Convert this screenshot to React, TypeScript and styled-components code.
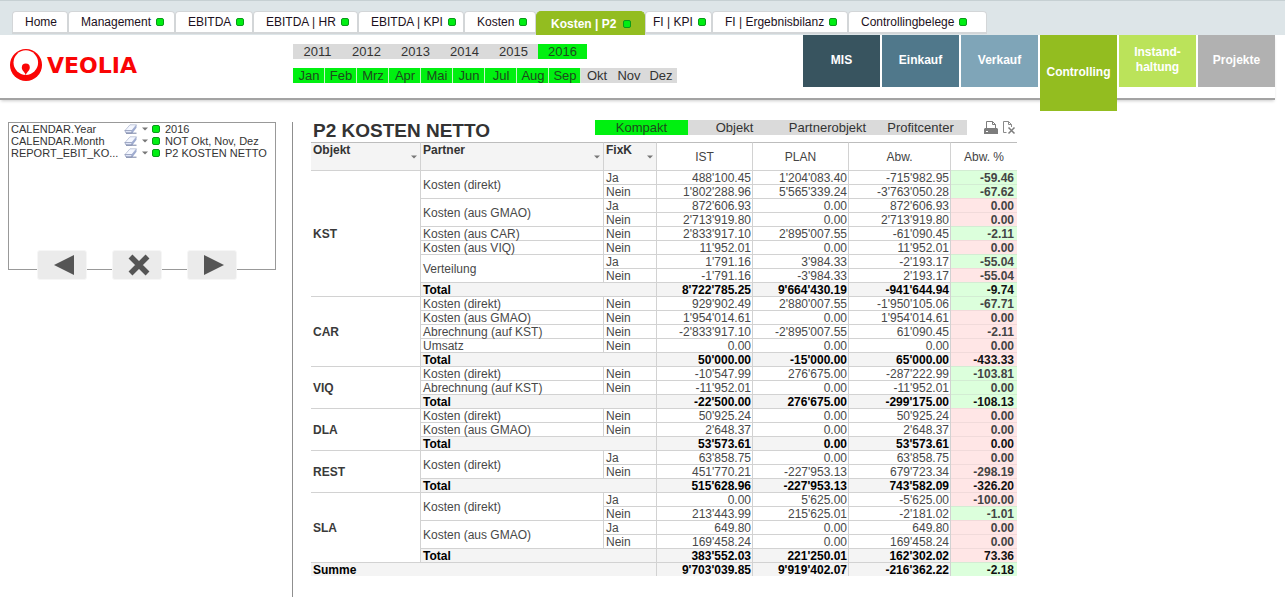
import React from "react";
import styled, { createGlobalStyle } from "styled-components";

const GlobalStyle = createGlobalStyle`
  * { box-sizing: border-box; }
  body {
    margin: 0;
    background: #fff;
    color: #333;
    font: 12px/12px "Liberation Sans", Arial, sans-serif;
  }
  button { font: inherit; color: inherit; border: 0; padding: 0; background: none; cursor: pointer; }
  a { color: inherit; text-decoration: none; }
`;

const Page = styled.div`
  display: flex;
  flex-direction: column;
  min-height: 100vh;
`;

/* ---------- sheet tabs ---------- */

const TabBar = styled.nav`
  display: flex;
  align-items: flex-start;
  height: 35px;
  padding: 10px 0 0 12px;
  background: #dde5e8;
  border-top: 1px solid #c6d0d3;
`;

const Tab = styled.a<{ $width: number; $tucked?: boolean }>`
  display: flex;
  align-items: center;
  gap: 5px;
  flex: 0 0 ${(p) => p.$width}px;
  height: 23px;
  padding-left: ${(p) => (p.$tucked ? 7 : 12)}px;
  background: #fff;
  color: #1c1020;
  border: 1px solid #d3d6d8;
  border-width: 1px 1px 2px 1px;
  border-radius: 4px 4px 0 0;
  white-space: nowrap;
`;

const ActiveTab = styled(Tab)`
  gap: 7px;
  height: 24px;
  padding-left: 14px;
  background: #93bd20;
  border-color: #93bd20;
  border-bottom-width: 0;
  border-radius: 5px 5px 0 0;
  color: #fff;
  font-weight: bold;
`;

const Dot = styled.span`
  flex: none;
  width: 8px;
  height: 8px;
  background: #00ee12;
  border: 1px solid #0a9a1a;
  border-radius: 2px;
`;

/* ---------- header ---------- */

const Header = styled.header`
  display: flex;
  align-items: flex-start;
  height: 65px;
  margin-right: 10px;
  border-bottom: 2px solid #a3a3a3;
  box-shadow: 0 2px 3px -1px #ccc;
`;

const Brand = styled.a`
  display: flex;
  align-items: center;
  gap: 4px;
  flex: 0 0 284px;
  height: 60px;
  padding-left: 9px;
  color: #fa0505;
  font: bold 22px/24px "DejaVu Sans", sans-serif;
`;

const BrandName = styled.span`
  padding-top: 2px;
`;

const Selectors = styled.div`
  display: flex;
  flex-direction: column;
  gap: 9px;
  padding: 9px 0 0 9px;
`;

const PickRow = styled.div`
  display: flex;
`;

const Pick = styled.button<{ $width: number; $on?: boolean }>`
  width: ${(p) => p.$width}px;
  height: 15px;
  font-size: 13px;
  line-height: 15px;
  color: ${(p) => (p.$on ? "#1d4a1d" : "#333")};
  background: ${(p) => (p.$on ? "#00f010" : "#dadada")};
`;

const Month = styled(Pick)`
  padding-left: 1px;
  border-right: 1px solid ${(p) => (p.$on ? "#c8f5c8" : "#dadada")};
`;

const Modules = styled.nav`
  display: flex;
  align-items: flex-start;
  gap: 2px;
  margin-left: auto;
`;

const Module = styled.a<{ $color: string; $current?: boolean }>`
  display: flex;
  align-items: center;
  justify-content: center;
  width: 77px;
  height: ${(p) => (p.$current ? 76 : 52)}px;
  padding-bottom: 2px;
  background: ${(p) => p.$color};
  color: #fff;
  font-weight: bold;
  line-height: 15px;
  text-align: center;
  white-space: pre-line;
`;

/* ---------- side panel ---------- */

const Main = styled.main`
  display: flex;
  flex: 1;
  padding-top: 20px;
`;

const Side = styled.aside`
  flex: 0 0 293px;
  margin-top: 2px;
  padding: 0 16px 0 8px;
  border-right: 1px solid #8f8f8f;
`;

const FilterBox = styled.div`
  height: 148px;
  padding: 0 2px;
  border: 1px solid #999;
  font-size: 11px;
  line-height: 12px;
`;

const FilterRow = styled.div`
  display: grid;
  grid-template-columns: 109px 14px 6px 8px 1fr;
  column-gap: 4px;
  align-items: center;
  height: 12px;
`;

const FilterName = styled.span`
  white-space: nowrap;
`;

const FilterValue = styled(FilterName)`
  padding-left: 1px;
`;

const IconButton = styled.button`
  display: flex;
  align-items: center;
  justify-content: center;
`;

const StepRow = styled.div`
  position: relative;
  display: flex;
  gap: 25px;
  margin: -20px 0 0 29px;
`;

const StepButton = styled(IconButton)`
  width: 50px;
  height: 30px;
  padding-left: 4px;
  background: #ebebeb;
  border: 1px solid #f6f6f6;
  border-radius: 3px;
`;

/* ---------- report ---------- */

const Report = styled.section`
  flex: 0 1 724px;
  padding-left: 18px;
`;

const ReportBar = styled.div`
  display: flex;
  align-items: flex-start;
  height: 22px;
  padding-right: 1px;
`;

const Title = styled.h1`
  margin: 0 auto 0 2px;
  font-size: 19px;
  line-height: 22px;
`;

const Tools = styled.div`
  display: flex;
  gap: 4px;
  margin-left: 17px;
`;

const Table = styled.table`
  width: 100%;
  table-layout: fixed;
  border-spacing: 0;
  border-collapse: separate;
`;

const DimHead = styled.th`
  height: 28px;
  padding: 1px 3px 0 2px;
  text-align: left;
  vertical-align: top;
  background: #f4f4f4;
  border-top: 1px solid #bdbdbd;
  border-right: 1px solid #d2d2d2;
`;

const DimInner = styled.div`
  display: flex;
  justify-content: space-between;
  height: 18px;
`;

const SortButton = styled(IconButton)`
  align-self: flex-end;
  height: 10px;
`;

const MeasureHead = styled.th`
  padding: 1px 0 0;
  font-weight: normal;
  color: #444;
  border-top: 1px solid #bdbdbd;
  border-right: 1px solid #d2d2d2;
  &:last-child { border-right: 0; }
`;

const LabelCell = styled.td<{ $strong?: boolean }>`
  padding: 1px 2px 0;
  color: ${(p) => (p.$strong ? "#000" : "#484848")};
  font-weight: ${(p) => (p.$strong ? "bold" : "normal")};
  background: ${(p) => (p.$strong ? "#f4f4f4" : "#fff")};
  border-top: 1px solid #d2d2d2;
  border-right: 1px solid #d2d2d2;
  white-space: nowrap;
`;

const GroupCell = styled.th`
  padding: 1px 2px 0;
  text-align: left;
  color: #3a3a3a;
  border-top: 1px solid #d2d2d2;
  border-right: 1px solid #d2d2d2;
`;

const NumberCell = styled(LabelCell)`
  padding: 1px 1px 0 0;
  text-align: right;
`;

const PercentCell = styled(NumberCell)<{ $good: boolean }>`
  padding-right: 3px;
  font-weight: bold;
  color: ${(p) => (p.$strong ? "#111" : "#444")};
  background: ${(p) => (p.$good ? "#dcffdc" : "#ffe6e6")};
  border-top-color: ${(p) => (p.$good ? "#d3ecd3" : "#f1dada")};
  border-right: 0;
`;

/* ---------- drawings ---------- */

const VeoliaMark = () => (
  <svg width="34" height="34" viewBox="0 0 34 34" aria-hidden="true">
    <circle cx="17" cy="17" r="16" fill="#fa0505" />
    <circle cx="16.800" cy="14.600" r="12.300" fill="#fff" />
    <path d="M16.800 27.500C16.400 24 12.800 22.800 12.800 19.400a4 4 0 0 1 8 0c0 3.400-3.600 4.600-4 8.100z" fill="#fa0505" />
  </svg>
);

const Triangle = () => (
  <svg width="6" height="4" viewBox="0 0 6 4" aria-hidden="true">
    <path d="M0 0.500h6L3 3.500z" fill="#777" />
  </svg>
);

const Eraser = () => (
  <svg width="14" height="10" viewBox="0 0 14 10" aria-hidden="true">
    <path d="M1 6.500L6 .8h6.500L7.800 6.500z" fill="#f4f7ff" stroke="#a9b2cc" strokeWidth=".7" />
    <path d="M.8 6.500h7v2.500H2z" fill="#dfe5f7" stroke="#8d97b6" strokeWidth=".7" />
    <path d="M7.800 6.500L12.500.8v3L8.500 9h-.7z" fill="#9eabd0" />
    <path d="M2 9.200h10.500" stroke="#66739a" strokeWidth=".9" />
  </svg>
);

const Printer = () => (
  <svg width="14" height="15" viewBox="0 0 14 15" aria-hidden="true">
    <path d="M2.500 8V1.500h6l3 3V8" fill="#fff" stroke="#7d7d7d" />
    <path d="M8.500 1.500v3h3" fill="none" stroke="#7d7d7d" />
    <path d="M0 9l1-1h12l1 1v5H0z" fill="#7d7d7d" />
    <path d="M2 11.500h2" stroke="#fff" />
  </svg>
);

const ExportSheet = () => (
  <svg width="14" height="15" viewBox="0 0 14 15" aria-hidden="true">
    <path d="M4.500 12.500h-3v-11h5l3 3V7" fill="none" stroke="#8a8a8a" />
    <path d="M6.500 1.500v3h3" fill="none" stroke="#8a8a8a" />
    <path d="M6.500 7.500l6 6M12.500 7.500l-6 6" stroke="#7d7d7d" strokeWidth="1.500" />
  </svg>
);

const ArrowLeft = () => (
  <svg width="20" height="20" viewBox="0 0 20 20" aria-hidden="true">
    <path d="M20 0v20L0 10z" fill="#555" />
  </svg>
);

const ArrowRight = () => (
  <svg width="20" height="20" viewBox="0 0 20 20" aria-hidden="true">
    <path d="M0 0v20L20 10z" fill="#555" />
  </svg>
);

const Cross = () => (
  <svg width="22" height="22" viewBox="0 0 22 22" aria-hidden="true">
    <path d="M2.500 2.500l17 17M19.500 2.500l-17 17" stroke="#555" strokeWidth="5.500" />
  </svg>
);

/* ---------- data ---------- */

type TabItem = { label: string; width: number; plain?: boolean; active?: boolean; tucked?: boolean };

const tabs: TabItem[] = [
  { label: "Home", width: 56, plain: true },
  { label: "Management", width: 107 },
  { label: "EBITDA", width: 78 },
  { label: "EBITDA | HR", width: 105 },
  { label: "EBITDA | KPI", width: 106 },
  { label: "Kosten", width: 72 },
  { label: "Kosten | P2", width: 109, active: true },
  { label: "FI | KPI", width: 67, tucked: true },
  { label: "FI | Ergebnisbilanz", width: 136 },
  { label: "Controllingbelege", width: 139 },
];

const years = ["2011", "2012", "2013", "2014", "2015", "2016"];
const months = ["Jan", "Feb", "Mrz", "Apr", "Mai", "Jun", "Jul", "Aug", "Sep", "Okt", "Nov", "Dez"];
const views = ["Kompakt", "Objekt", "Partnerobjekt", "Profitcenter"];

const modules = [
  { label: "MIS", color: "#38545f" },
  { label: "Einkauf", color: "#50788b" },
  { label: "Verkauf", color: "#7fa5b8" },
  { label: "Controlling", color: "#93bd20", current: true },
  { label: "Instand-\nhaltung", color: "#bbe35a" },
  { label: "Projekte", color: "#b1b1b1" },
];

const filters = [
  ["CALENDAR.Year", "2016"],
  ["CALENDAR.Month", "NOT Okt, Nov, Dez"],
  ["REPORT_EBIT_KO...", "P2 KOSTEN NETTO"],
];

type Values = [ist: string, plan: string, abw: string, pct: string, good: boolean];
type Line = { fix: string; values: Values };
type Partner = { name: string; lines: Line[] };
type Group = { name: string; partners: Partner[]; total: Values };

const ja = (...values: Values): Line => ({ fix: "Ja", values });
const nein = (...values: Values): Line => ({ fix: "Nein", values });

const groups: Group[] = [
  {
    name: "KST",
    partners: [
      { name: "Kosten (direkt)", lines: [ja("488'100.45", "1'204'083.40", "-715'982.95", "-59.46", true), nein("1'802'288.96", "5'565'339.24", "-3'763'050.28", "-67.62", true)] },
      { name: "Kosten (aus GMAO)", lines: [ja("872'606.93", "0.00", "872'606.93", "0.00", false), nein("2'713'919.80", "0.00", "2'713'919.80", "0.00", false)] },
      { name: "Kosten (aus CAR)", lines: [nein("2'833'917.10", "2'895'007.55", "-61'090.45", "-2.11", true)] },
      { name: "Kosten (aus VIQ)", lines: [nein("11'952.01", "0.00", "11'952.01", "0.00", false)] },
      { name: "Verteilung", lines: [ja("1'791.16", "3'984.33", "-2'193.17", "-55.04", true), nein("-1'791.16", "-3'984.33", "2'193.17", "-55.04", false)] },
    ],
    total: ["8'722'785.25", "9'664'430.19", "-941'644.94", "-9.74", true],
  },
  {
    name: "CAR",
    partners: [
      { name: "Kosten (direkt)", lines: [nein("929'902.49", "2'880'007.55", "-1'950'105.06", "-67.71", true)] },
      { name: "Kosten (aus GMAO)", lines: [nein("1'954'014.61", "0.00", "1'954'014.61", "0.00", false)] },
      { name: "Abrechnung (auf KST)", lines: [nein("-2'833'917.10", "-2'895'007.55", "61'090.45", "-2.11", false)] },
      { name: "Umsatz", lines: [nein("0.00", "0.00", "0.00", "0.00", false)] },
    ],
    total: ["50'000.00", "-15'000.00", "65'000.00", "-433.33", false],
  },
  {
    name: "VIQ",
    partners: [
      { name: "Kosten (direkt)", lines: [nein("-10'547.99", "276'675.00", "-287'222.99", "-103.81", true)] },
      { name: "Abrechnung (auf KST)", lines: [nein("-11'952.01", "0.00", "-11'952.01", "0.00", true)] },
    ],
    total: ["-22'500.00", "276'675.00", "-299'175.00", "-108.13", true],
  },
  {
    name: "DLA",
    partners: [
      { name: "Kosten (direkt)", lines: [nein("50'925.24", "0.00", "50'925.24", "0.00", false)] },
      { name: "Kosten (aus GMAO)", lines: [nein("2'648.37", "0.00", "2'648.37", "0.00", false)] },
    ],
    total: ["53'573.61", "0.00", "53'573.61", "0.00", false],
  },
  {
    name: "REST",
    partners: [
      { name: "Kosten (direkt)", lines: [ja("63'858.75", "0.00", "63'858.75", "0.00", false), nein("451'770.21", "-227'953.13", "679'723.34", "-298.19", false)] },
    ],
    total: ["515'628.96", "-227'953.13", "743'582.09", "-326.20", false],
  },
  {
    name: "SLA",
    partners: [
      { name: "Kosten (direkt)", lines: [ja("0.00", "5'625.00", "-5'625.00", "-100.00", false), nein("213'443.99", "215'625.01", "-2'181.02", "-1.01", true)] },
      { name: "Kosten (aus GMAO)", lines: [ja("649.80", "0.00", "649.80", "0.00", false), nein("169'458.24", "0.00", "169'458.24", "0.00", false)] },
    ],
    total: ["383'552.03", "221'250.01", "162'302.02", "73.36", false],
  },
];

const grandTotal: Values = ["9'703'039.85", "9'919'402.07", "-216'362.22", "-2.18", true];

const columnWidths = [110, 183, 53, 96, 96, 102, 66];

/* ---------- table parts ---------- */

function ValueCells({ values, strong }: { values: Values; strong?: boolean }) {
  const [ist, plan, abw, pct, good] = values;
  return (
    <>
      <NumberCell $strong={strong}>{ist}</NumberCell>
      <NumberCell $strong={strong}>{plan}</NumberCell>
      <NumberCell $strong={strong}>{abw}</NumberCell>
      <PercentCell $strong={strong} $good={good}>{pct}</PercentCell>
    </>
  );
}

function GroupRows({ group }: { group: Group }) {
  const span = group.partners.reduce((n, p) => n + p.lines.length, 1);
  return (
    <tbody>
      {group.partners.map((partner, pi) =>
        partner.lines.map((line, li) => (
          <tr key={`${pi}-${li}`}>
            {pi === 0 && li === 0 && <GroupCell scope="rowgroup" rowSpan={span}>{group.name}</GroupCell>}
            {li === 0 && <LabelCell rowSpan={partner.lines.length}>{partner.name}</LabelCell>}
            <LabelCell>{line.fix}</LabelCell>
            <ValueCells values={line.values} />
          </tr>
        ))
      )}
      <tr>
        <LabelCell $strong colSpan={2}>Total</LabelCell>
        <ValueCells strong values={group.total} />
      </tr>
    </tbody>
  );
}

export default function App() {
  return (
    <Page>
      <GlobalStyle />
      <TabBar>
        {tabs.map((t) => {
          const Item = t.active ? ActiveTab : Tab;
          return (
            <Item key={t.label} href="#" $width={t.width} $tucked={t.tucked} aria-current={t.active ? "page" : undefined}>
              {t.label}
              {!t.plain && <Dot />}
            </Item>
          );
        })}
      </TabBar>

      <Header>
        <Brand href="#">
          <VeoliaMark />
          <BrandName>VEOLIA</BrandName>
        </Brand>
        <Selectors>
          <PickRow>
            {years.map((y) => (
              <Pick key={y} $width={49} $on={y === "2016"} aria-pressed={y === "2016"}>{y}</Pick>
            ))}
          </PickRow>
          <PickRow>
            {months.map((m, i) => (
              <Month key={m} $width={32} $on={i < 9} aria-pressed={i < 9}>{m}</Month>
            ))}
          </PickRow>
        </Selectors>
        <Modules>
          {modules.map((m) => (
            <Module key={m.label} href="#" $color={m.color} $current={m.current}>{m.label}</Module>
          ))}
        </Modules>
      </Header>

      <Main>
        <Side>
          <FilterBox>
            {filters.map(([name, value]) => (
              <FilterRow key={name}>
                <FilterName>{name}</FilterName>
                <IconButton aria-label={`Clear ${name}`}><Eraser /></IconButton>
                <IconButton aria-label={`Open ${name}`}><Triangle /></IconButton>
                <Dot />
                <FilterValue>{value}</FilterValue>
              </FilterRow>
            ))}
          </FilterBox>
          <StepRow>
            <StepButton aria-label="Back"><ArrowLeft /></StepButton>
            <StepButton aria-label="Clear"><Cross /></StepButton>
            <StepButton aria-label="Forward"><ArrowRight /></StepButton>
          </StepRow>
        </Side>

        <Report>
          <ReportBar>
            <Title>P2 KOSTEN NETTO</Title>
            <PickRow>
              {views.map((v) => (
                <Pick key={v} $width={93} $on={v === "Kompakt"} aria-pressed={v === "Kompakt"}>{v}</Pick>
              ))}
            </PickRow>
            <Tools>
              <IconButton aria-label="Print"><Printer /></IconButton>
              <IconButton aria-label="Export"><ExportSheet /></IconButton>
            </Tools>
          </ReportBar>
          <Table>
            <colgroup>
              {columnWidths.map((w, i) => <col key={i} width={w} />)}
            </colgroup>
            <thead>
              <tr>
                {["Objekt", "Partner", "FixK"].map((h) => (
                  <DimHead key={h} scope="col">
                    <DimInner>
                      {h}
                      <SortButton aria-label={`Filter ${h}`}><Triangle /></SortButton>
                    </DimInner>
                  </DimHead>
                ))}
                {["IST", "PLAN", "Abw.", "Abw. %"].map((h) => (
                  <MeasureHead key={h} scope="col">{h}</MeasureHead>
                ))}
              </tr>
            </thead>
            {groups.map((g) => <GroupRows key={g.name} group={g} />)}
            <tfoot>
              <tr>
                <LabelCell $strong colSpan={3}>Summe</LabelCell>
                <ValueCells strong values={grandTotal} />
              </tr>
            </tfoot>
          </Table>
        </Report>
      </Main>
    </Page>
  );
}
